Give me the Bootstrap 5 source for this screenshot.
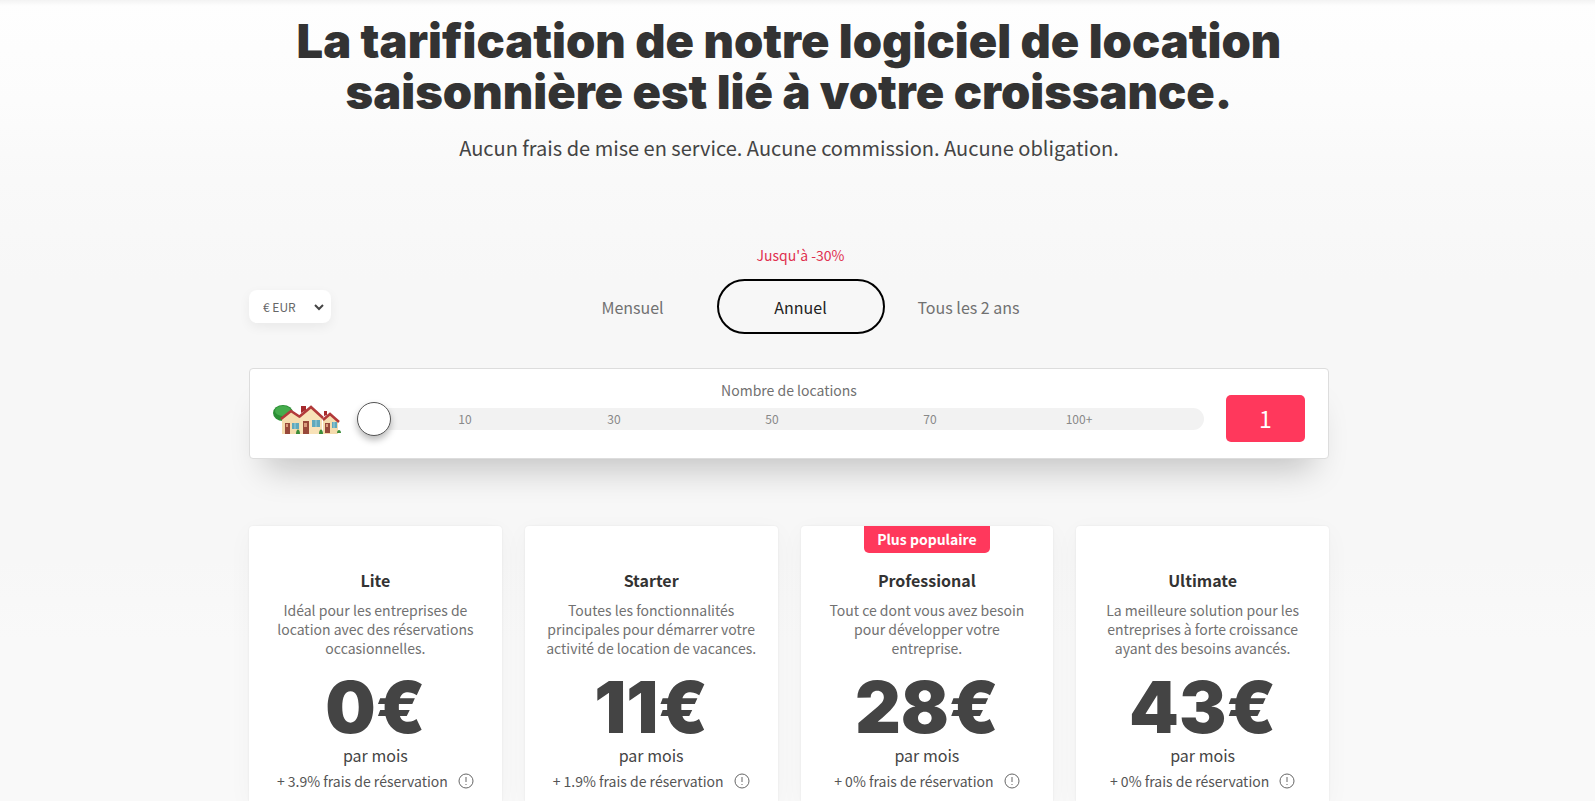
<!DOCTYPE html>
<html lang="fr">
<head>
<meta charset="utf-8">
<meta name="viewport" content="width=device-width, initial-scale=1">
<title>Tarifs</title>
<link rel="stylesheet" href="https://cdn.jsdelivr.net/npm/bootstrap@5.3.0/dist/css/bootstrap.min.css">
<style>
  :root { --pink: #ff385c; --ink: #333; --soft: #717171; }
  body {
    font-family: "Noto Sans CJK SC", "Noto Sans", sans-serif;
    color: var(--ink);
    background: #f9f9f9 linear-gradient(#fefefe 0, #fcfcfc 100px, #f9f9f9 180px, #f7f7f7 280px, #f7f7f7 560px, #f9f9f9 640px) no-repeat;
  }
  .top-shade { height: 6px; background: linear-gradient(#f3f3f3, #fefefe); }
  .page { padding-right: 17px; }
  .wrap { max-width: 1080px; }
  h1, .price { font-family: Inter, "Liberation Sans", sans-serif; font-weight: 900; }
  h1 { font-size: 47px; line-height: 51px; padding-top: 9px; }
  .intro { font-size: 20px; line-height: 30px; margin: 16px 0 0; color: #444; }
  .toolbar { margin-top: 82px; display: grid; grid-template-columns: 13fr auto 12fr; align-items: end; }
  .currency {
    width: 82px; height: 33px; border: 0; border-radius: 8px; font-size: 12px; padding: 0 24px 0 14px; color: #666; margin-bottom: 11px;
    background-image: url("data:image/svg+xml,%3csvg xmlns='http://www.w3.org/2000/svg' viewBox='0 0 12 12'%3e%3cpath d='M2 4l4 4 4-4' fill='none' stroke='%23444' stroke-width='2'/%3e%3c/svg%3e");
    background-position: right 6px center; background-size: 12px 12px; box-shadow: 0 4px 12px rgba(0,0,0,.06);
  }
  .saving { font-size: 14px; line-height: 20px; color: #e0304f; margin-bottom: 14px; }
  .period { width: 168px; height: 55px; border: 2px solid transparent; border-radius: 28px; font-size: 16px; line-height: 24px; color: var(--soft); padding: 0; }
  .period.active { border-color: #000; color: #222; background: transparent; }
  .slider-card {
    border: 1px solid #ddd; border-radius: 4px; margin-top: 34px; padding: 11px 23px 16px;
    display: grid; grid-template-columns: 68px 1fr 79px; grid-template-rows: 15px 47px; align-items: center;
    box-shadow: 0 26px 34px -16px rgba(0,0,0,.22);
  }
  .slide-label { grid-column: 1 / -1; align-self: start; font-size: 14px; line-height: 20px; color: var(--soft); }
  .rail { height: 22px; background: #f2f2f2; border-radius: 11px; position: relative; margin: 0 22px 0 16px; }
  .rail input { position: absolute; inset: 0; width: 100%; height: 22px; margin: 0; appearance: none; background: none; }
  .rail input::-webkit-slider-thumb { appearance: none; width: 34px; height: 34px; border-radius: 50%; background: #fff; border: 1px solid #555; box-shadow: 0 4px 7px rgba(0,0,0,.28); }
  .ticks { display: grid; grid-template-columns: 150fr 148fr 168fr 148fr 150fr; padding: 0 50px 0 33px; font-size: 12px; line-height: 22px; color: #888; text-align: center; }
  .count { height: 47px; border-radius: 5px; background: var(--pink); color: #fff; font-size: 23px; line-height: 47px; }
  .plans { margin-top: 67px; display: grid; grid-template-columns: repeat(4, 1fr); gap: 23px; }
  .plan { background: #fff; border-radius: 4px 4px 0 0; padding: 42px 12px 0; box-shadow: 0 6px 26px rgba(0,0,0,.035), 0 0 2px rgba(0,0,0,.08); position: relative; }
  .plan h2 { font-size: 16px; line-height: 24px; font-weight: 700; margin: 0 0 9px; }
  .plan .about { font-size: 14px; line-height: 19px; color: var(--soft); margin: 0 0 15px; }
  .price { font-size: 71px; line-height: 68px; color: #444; margin: 0; }
  .per { font-size: 16px; line-height: 24px; margin: 2px 0; color: #444; }
  .fee { font-size: 14px; line-height: 24px; color: #555; gap: 10px; }
  .info { width: 16px; height: 16px; }
  .ribbon { position: absolute; top: 0; left: 50%; transform: translateX(-50%); width: 126px; height: 27px; line-height: 27px; font-size: 14px; font-weight: 700; color: #fff; background: var(--pink); border-radius: 0 0 5px 5px; }
</style>
</head>
<body class="d-flex flex-column min-vh-100">
<div class="top-shade"></div>
<div class="page flex-grow-1 d-flex flex-column">
<main class="wrap w-100 mx-auto flex-grow-1 d-flex flex-column">
  <header class="text-center">
    <h1 class="mb-0">La tarification de notre logiciel de location<br>saisonnière est lié à votre croissance.</h1>
    <p class="intro">Aucun frais de mise en service. Aucune commission. Aucune obligation.</p>
  </header>

  <div class="toolbar">
    <select class="form-select currency" aria-label="Devise"><option>€ EUR</option></select>
    <div class="text-center">
      <div class="saving">Jusqu'à -30%</div>
      <div class="d-flex">
        <button type="button" class="btn period">Mensuel</button>
        <button type="button" class="btn period active">Annuel</button>
        <button type="button" class="btn period">Tous les 2 ans</button>
      </div>
    </div>
  </div>

  <section class="slider-card bg-white text-center">
    <label for="rentals" class="slide-label">Nombre de locations</label>
    <svg viewBox="0 0 68 34" width="68" height="34">
      <ellipse cx="10" cy="11" rx="10" ry="8" fill="#2b8f35"/><ellipse cx="10" cy="9" rx="8" ry="5" fill="#45ac4c"/>
      <path d="M9 17l9-8 9 7v16H9z" fill="#f5dcae"/><path d="M27 14 38 4l11 11v17H27z" fill="#f8e2b8"/><path d="M50 18l7-6 8 7v13H50z" fill="#f5dcae"/>
      <path d="M28 11V4h5v4zM51 14V9h3v4z" fill="#a62a2d"/>
      <path d="M8 17l10-8 9 6M26 15 38 5l12 11M50 18l7-6 9 8" fill="none" stroke="#b23a3a" stroke-width="2.6"/>
      <path d="M12 21h5v11h-5zM30 19h6v13h-6zM52 21h5v10h-5z" fill="#98483a"/>
      <path d="M13 22h2v3h-2zM31 21h3v4h-3zM53 22h2v3h-2z" fill="#d99a7c"/>
      <path d="M19 21h7v6h-7zM39 18h8v7h-8zM59 20h5v6h-5z" fill="#5fa9bd"/>
      <path d="M22 21v6M43 18v7M61 20v6" stroke="#9fd0dc" fill="none"/>
      <path d="M23 32c0-6 4-6 4 0zM46 32c0-6 4-6 4 0zM64 31c0-4 4-4 4 0z" fill="#3c8d3a"/>
    </svg>
    <div class="rail">
      <div class="ticks"><span>10</span><span>30</span><span>50</span><span>70</span><span>100+</span></div>
      <input type="range" id="rentals" min="1" max="100" value="1">
    </div>
    <output for="rentals" class="count">1</output>
  </section>

  <section class="plans text-center flex-grow-1">
    <article class="plan">
      <h2>Lite</h2>
      <p class="about">Idéal pour les entreprises de<br>location avec des réservations<br>occasionnelles.</p>
      <p class="price">0€</p>
      <p class="per">par mois</p>
      <div class="fee d-flex justify-content-center align-items-center">+ 3.9% frais de réservation<svg class="info" viewBox="0 0 16 16" fill="none" stroke="#666"><circle cx="8" cy="8" r="7"/><path d="M8 4v5M8 11v1"/></svg></div>
    </article>
    <article class="plan">
      <h2>Starter</h2>
      <p class="about">Toutes les fonctionnalités<br>principales pour démarrer votre<br>activité de location de vacances.</p>
      <p class="price">11€</p>
      <p class="per">par mois</p>
      <div class="fee d-flex justify-content-center align-items-center">+ 1.9% frais de réservation<svg class="info" viewBox="0 0 16 16" fill="none" stroke="#666"><circle cx="8" cy="8" r="7"/><path d="M8 4v5M8 11v1"/></svg></div>
    </article>
    <article class="plan">
      <span class="ribbon">Plus populaire</span>
      <h2>Professional</h2>
      <p class="about">Tout ce dont vous avez besoin<br>pour développer votre<br>entreprise.</p>
      <p class="price">28€</p>
      <p class="per">par mois</p>
      <div class="fee d-flex justify-content-center align-items-center">+ 0% frais de réservation<svg class="info" viewBox="0 0 16 16" fill="none" stroke="#666"><circle cx="8" cy="8" r="7"/><path d="M8 4v5M8 11v1"/></svg></div>
    </article>
    <article class="plan">
      <h2>Ultimate</h2>
      <p class="about">La meilleure solution pour les<br>entreprises à forte croissance<br>ayant des besoins avancés.</p>
      <p class="price">43€</p>
      <p class="per">par mois</p>
      <div class="fee d-flex justify-content-center align-items-center">+ 0% frais de réservation<svg class="info" viewBox="0 0 16 16" fill="none" stroke="#666"><circle cx="8" cy="8" r="7"/><path d="M8 4v5M8 11v1"/></svg></div>
    </article>
  </section>
</main>
</div>
<script src="https://cdn.jsdelivr.net/npm/bootstrap@5.3.0/dist/js/bootstrap.bundle.min.js"></script>
</body>
</html>
